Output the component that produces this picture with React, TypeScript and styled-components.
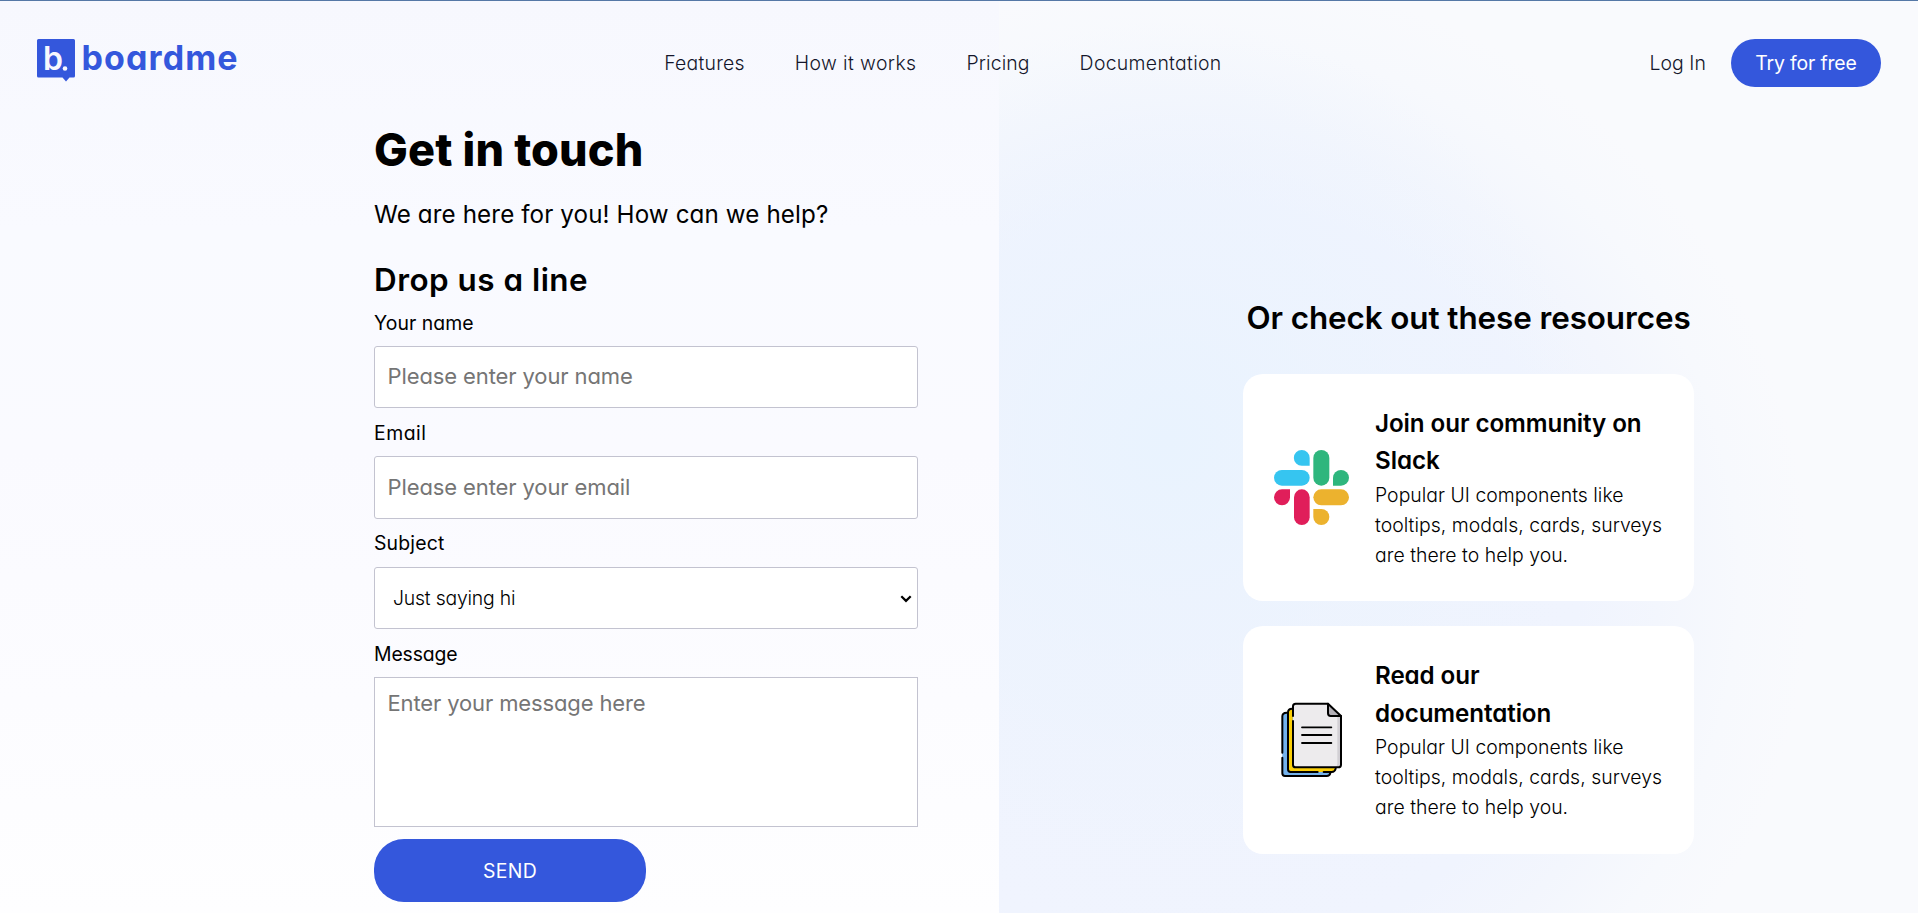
import React from "react";
import styled, { createGlobalStyle } from "styled-components";

const BLUE = "#3457dc";

const GlobalStyle = createGlobalStyle`
  *, *::before, *::after { box-sizing: border-box; }
  body {
    margin: 0;
    overflow: hidden;
    color: #000;
    font-family: Inter, "Open Sans", sans-serif;
    font-feature-settings: "cv11";
  }
  h1, h2, h3, p { margin: 0; }
  input, select, textarea, button {
    font-family: inherit;
    font-feature-settings: inherit;
  }
`;

const Page = styled.div`
  min-height: 913px;
  border-top: 1px solid #5578a6;
  background:
    radial-gradient(circle at 170px 440px, #e9f3fe 0, rgba(235, 243, 254, 0.7) 170px, rgba(238, 243, 254, 0) 420px) right top / 919px 100% no-repeat,
    radial-gradient(circle at 200px 580px, #eff3fd 0, #f0f4fe 380px, #f3f6fd 460px, #f7f9fd 540px, #f9fafd 610px) right top / 919px 100% no-repeat,
    linear-gradient(180deg, #f7f8fe 0, #f9faff 230px, #fafaff 450px, #fcfcff 700px, #fefeff 913px);
`;

const Header = styled.header`
  display: flex;
  justify-content: space-between;
  align-items: center;
  height: 124px;
  padding: 0 37px;
`;

const Logo = styled.a`
  display: flex;
  width: 200px;
  height: 48px;
  color: ${BLUE};
  text-decoration: none;

  svg { flex: none; }
`;

const Wordmark = styled.span`
  margin-left: 5.5px;
  font-size: 34px;
  font-weight: 700;
  line-height: 38px;
  letter-spacing: 1.1px;
`;

const Nav = styled.nav`
  display: flex;
  width: 558px;
  gap: 50px;
`;

const NavLink = styled.a<{ $ls?: number }>`
  color: #14162b;
  font-size: 19.4px;
  font-weight: 300;
  line-height: 30px;
  letter-spacing: ${(p) => p.$ls ?? 0}px;
  text-decoration: none;
  white-space: nowrap;
`;

const Account = styled.div`
  display: flex;
  align-items: center;
  gap: 25px;
`;

const TryButton = styled.button`
  width: 150px;
  height: 48px;
  padding: 0;
  border: 0;
  border-radius: 25px;
  background: ${BLUE};
  color: #fff;
  font-size: 19.4px;
  font-weight: 400;
  letter-spacing: -0.15px;
`;

const Main = styled.main`
  display: grid;
  grid-template-columns: 999px 1fr;
`;

const Contact = styled.section`
  width: 918px;
  padding-left: 374px;
`;

const Title = styled.h1`
  font-size: 45px;
  font-weight: 800;
  line-height: 50px;
  letter-spacing: 0.15px;
`;

const Lead = styled.p`
  margin-top: 22px;
  font-size: 24.2px;
  line-height: 36px;
  letter-spacing: 0.11px;
`;

const Heading = styled.h2<{ $ls: number }>`
  font-size: 31.4px;
  font-weight: 600;
  line-height: 39px;
  letter-spacing: ${(p) => p.$ls}px;
  white-space: nowrap;
`;

const Form = styled.form`
  display: flex;
  flex-direction: column;
  margin-top: 28px;
`;

const Field = styled.label`
  display: flex;
  flex-direction: column;
  gap: 8.3px;
  margin-bottom: 9.4px;

  &:first-of-type { margin-top: 7.500px; }
  &:last-of-type { margin-bottom: 12px; }
`;

const Label = styled.span<{ $ls: number }>`
  height: 30px;
  font-size: 19.4px;
  line-height: 30px;
  letter-spacing: ${(p) => p.$ls}px;
`;

const Input = styled.input`
  height: 62.7px;
  padding: 0 12.5px 2px;
  border: 1px solid #c3c3d0;
  border-radius: 3px;
  background: #fff;
  font-size: 22px;
  letter-spacing: -0.11px;
  &::placeholder { color: #757575; }
`;

const SelectBox = styled.div`
  position: relative;
  display: grid;

  svg {
    position: absolute;
    right: 6px;
    top: 28px;
    pointer-events: none;
  }
`;

const Select = styled.select`
  appearance: none;
  height: 62.7px;
  padding: 0 18px;
  border: 1px solid #c3c3d0;
  border-radius: 3px;
  background: #fff;
  color: #000;
  font-size: 19.4px;
  font-weight: 300;
  letter-spacing: -0.2px;
`;

const TextArea = styled.textarea`
  height: 150px;
  padding: 12px 12.5px;
  border: 1px solid #c3c3d0;
  border-radius: 0;
  background: #fff;
  font-size: 22px;
  line-height: 27px;
  letter-spacing: -0.13px;
  resize: none;
  &::placeholder { color: #757575; }
`;

const SendButton = styled.button`
  width: 272px;
  height: 63px;
  padding: 1px 0 0;
  border: 0;
  border-radius: 30px;
  background: ${BLUE};
  color: #fff;
  font-size: 19.4px;
  letter-spacing: 0.3px;
`;

const Resources = styled.section`
  padding: 174px 0 0 244px;
`;

const ResourcesTitle = styled.div`
  display: flex;
  justify-content: center;
  width: 451px;
`;

const CardList = styled.div`
  display: flex;
  flex-direction: column;
  gap: 25px;
  width: 451px;
  margin-top: 35.5px;
`;

const Card = styled.article`
  display: flex;
  align-items: center;
  gap: 26px;
  height: 227.5px;
  padding: 0 30px 0 31px;
  border-radius: 20px;
  background: #fff;

  svg { flex: none; }
`;

const CardTitle = styled.h3`
  padding-right: 14px;
  font-size: 24.2px;
  font-weight: 600;
  line-height: 37.5px;
  letter-spacing: -0.09px;
`;

const CardText = styled.p`
  font-size: 19.4px;
  font-weight: 300;
  line-height: 30px;
  letter-spacing: 0.03px;
`;

const LogoMark = () => (
  <svg width="39" height="43" viewBox="0 0 39 43">
    <path d="M1.5 0H36.5Q38 0 38 1.5V37Q38 38.5 36.5 38.5H32.5L29 42.5L25.500 38.500H1.500Q0 38.500 0 37V1.500Q0 0 1.500 0Z" fill={BLUE} />
    <text x="6" y="31" fill="#f7f8fe" fontSize="32" fontWeight="600">b</text>
    <circle cx="28" cy="29.500" r="2.300" fill="#f7f8fe" />
  </svg>
);

const Chevron = () => (
  <svg width="12" height="8" viewBox="0 0 12 8">
    <path d="M1.300 1.200L6 5.900L10.700 1.200" fill="none" stroke="#000" strokeWidth="2.200" />
  </svg>
);

const SlackIcon = () => (
  <svg width="75" height="75" viewBox="0 0 225 225">
    <g fill="#36c5f0">
      <path d="M107 47.500H83.500A23.750 23.750 0 1 1 107 23.750Z" />
      <rect x="0" y="60" width="107" height="47" rx="23.500" />
    </g>
    <g fill="#2eb67d">
      <rect x="118" y="0" width="48" height="107" rx="24" />
      <path d="M177 107V83.500A24 23.500 0 1 1 201 107Z" />
    </g>
    <g fill="#e01e5a">
      <path d="M48 118V142A24 24 0 1 1 24 118Z" />
      <rect x="60" y="118" width="47" height="107" rx="23.500" />
    </g>
    <g fill="#ecb22e">
      <rect x="118" y="118" width="107" height="48" rx="24" />
      <path d="M118 177H142A24 24 0 1 1 118 201Z" />
    </g>
  </svg>
);

const DocsIcon = () => (
  <svg width="75" height="75" viewBox="42 38 225 225" fill="none" strokeLinecap="round" strokeLinejoin="round">
    <path d="M67 80Q67 70 79 70H100V248H211Q209 260 200 260H75Q67 260 67 252Z" fill="#74b2ec" />
    <path d="M84 67Q85 57 98 57V234H227Q226 248 215 248H92Q84 248 84 240Z" fill="#fbcf08" />
    <path d="M107 43H204L243 80V226Q243 234 235 234H107Q99 234 99 226V51Q99 43 107 43Z" fill="#edebed" />
    <path d="M232 80H243V226Q243 234 235 234H224Q232 232 232 224Z" fill="#d2cfd4" />
    <path d="M204 43V72Q204 80 212 80H243Z" fill="#b3b0b6" />
    <g stroke="#000" strokeWidth="6">
      <path d="M99 80V51Q99 43 107 43H204L243 80V226Q243 234 235 234H107Q99 234 99 226V95" />
      <path d="M204 43V72Q204 80 212 80H243" />
      <path d="M96 58Q84 58 84 69V240Q84 248 92 248H173M191 248H215Q225 248 227 238" />
      <path d="M80 70Q67 70 67 81V190M67 205V252Q67 260 75 260H200Q209 260 211 251" />
    </g>
    <path d="M126 114H214M126 137H214M126 161H214" stroke="#000" strokeWidth="5.500" />
  </svg>
);

const resources = [
  { title: "Join our community on Slack", icon: <SlackIcon /> },
  { title: "Read our documentation", icon: <DocsIcon /> },
];

export default function App() {
  return (
    <>
      <GlobalStyle />
      <Page>
        <Header>
          <Logo>
            <LogoMark />
            <Wordmark>boardme</Wordmark>
          </Logo>
          <Nav>
            <NavLink $ls={0.23}>Features</NavLink>
            <NavLink $ls={0.4}>How it works</NavLink>
            <NavLink $ls={0.12}>Pricing</NavLink>
            <NavLink $ls={0.32}>Documentation</NavLink>
          </Nav>
          <Account>
            <NavLink $ls={0.07}>Log In</NavLink>
            <TryButton>Try for free</TryButton>
          </Account>
        </Header>
        <Main>
          <Contact>
            <Title>Get in touch</Title>
            <Lead>We are here for you! How can we help?</Lead>
            <Form>
              <Heading $ls={0.5}>Drop us a line</Heading>
              <Field>
                <Label $ls={0.04}>Your name</Label>
                <Input placeholder="Please enter your name" />
              </Field>
              <Field>
                <Label $ls={0.5}>Email</Label>
                <Input placeholder="Please enter your email" />
              </Field>
              <Field>
                <Label $ls={0.18}>Subject</Label>
                <SelectBox>
                  <Select>
                    <option>Just saying hi</option>
                  </Select>
                  <Chevron />
                </SelectBox>
              </Field>
              <Field>
                <Label $ls={-0.12}>Message</Label>
                <TextArea placeholder="Enter your message here" />
              </Field>
              <SendButton type="button">SEND</SendButton>
            </Form>
          </Contact>
          <Resources>
            <ResourcesTitle>
              <Heading $ls={-0.08}>Or check out these resources</Heading>
            </ResourcesTitle>
            <CardList>
              {resources.map((r) => (
                <Card key={r.title}>
                  {r.icon}
                  <div>
                    <CardTitle>{r.title}</CardTitle>
                    <CardText>Popular UI components like tooltips, modals, cards, surveys are there to help you.</CardText>
                  </div>
                </Card>
              ))}
            </CardList>
          </Resources>
        </Main>
      </Page>
    </>
  );
}
